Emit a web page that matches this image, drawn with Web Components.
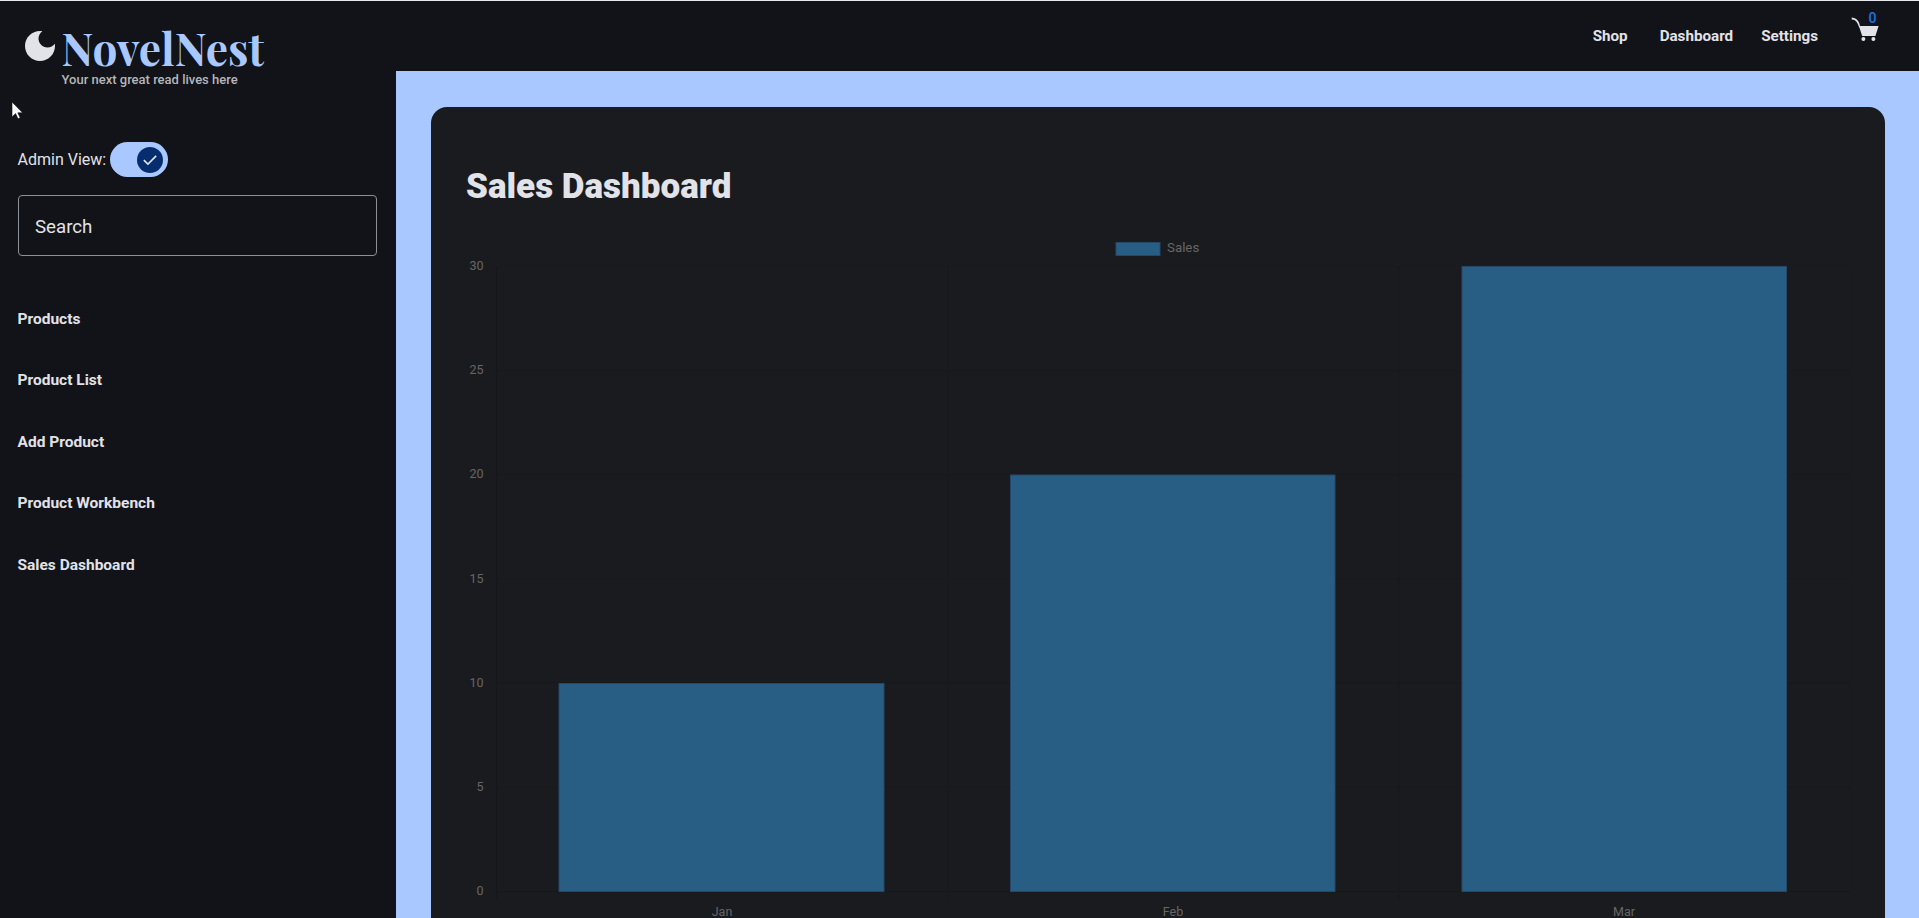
<!DOCTYPE html>
<html lang="en"><head><meta charset="utf-8"><title>NovelNest</title>
<style>
html,body{margin:0;padding:0;height:100%;overflow:hidden;background:#a8c8ff;}
body{font-family:Roboto,"Liberation Sans",sans-serif;}
</style></head>
<body>
<nn-app>
  <nn-header slot="header"></nn-header>
  <nn-sidebar slot="sidebar">
    <nn-toggle></nn-toggle>
    <nn-search></nn-search>
    <nn-navlink>Products</nn-navlink>
    <nn-navlink>Product List</nn-navlink>
    <nn-navlink>Add Product</nn-navlink>
    <nn-navlink>Product Workbench</nn-navlink>
    <nn-navlink>Sales Dashboard</nn-navlink>
  </nn-sidebar>
  <nn-card slot="main"><nn-chart></nn-chart></nn-card>
</nn-app>
<script>
function def(name, html, init){
  customElements.define(name, class extends HTMLElement{
    constructor(){super();this.attachShadow({mode:'open'}).innerHTML=html;}
    connectedCallback(){if(init)init(this.shadowRoot,this);}
  });
}
def('nn-app',`<style>
:host{display:grid;grid-template-columns:396px 1fr;grid-template-rows:70px 1fr;height:918px;width:1919px;overflow:hidden;border-top:1px solid #e8e8ee;box-sizing:border-box;background:#a8c8ff}
.h{grid-column:1/3;min-width:0;position:relative;z-index:1}
.s{min-width:0}.m{min-width:0}
</style>
<div class="h"><slot name="header"></slot></div>
<div class="s"><slot name="sidebar"></slot></div>
<div class="m"><slot name="main"></slot></div>`);

def('nn-header',`<style>
:host{display:flex;height:70px;background:#111318;color:#e2e2e9;align-items:flex-start;justify-content:space-between;position:relative}
.brand{display:grid;grid-template-columns:40px auto;padding:21.5px 0 0 20px;column-gap:1.5px}
svg.moon{width:40px;height:40px;display:block;margin-top:3.5px}
.name{font:700 44.2px/50px "Playfair Display","Liberation Serif",serif;color:#a8c8ff;margin-top:0}
.tag{grid-column:2;font:500 13px/14px Roboto,sans-serif;color:#b5b6bb;margin-top:0}
nav{display:flex;align-items:flex-start;padding-top:24.7px;margin-right:39px}
nav a{font:700 15.2px/20px Roboto,sans-serif;color:#e2e2e9;white-space:nowrap}
nav a:nth-child(2){margin-left:32px}
nav a:nth-child(3){margin-left:28px}
.cart{position:relative;width:30px;height:30px;margin-left:32px;margin-top:-10.7px}
.cart svg{display:block;width:30px;height:30px}
.cart b{position:absolute;left:18.5px;top:-5px;font:500 14px/16px Roboto,sans-serif;color:#1a73e8}
</style>
<div class="brand">
<svg class="moon" viewBox="0 0 24 24"><path fill="#e2e2e9" d="M12 3c-4.97 0-9 4.03-9 9s4.03 9 9 9 9-4.03 9-9c0-.46-.04-.92-.1-1.36-.98 1.37-2.58 2.26-4.4 2.26-2.98 0-5.4-2.42-5.4-5.4 0-1.81.89-3.42 2.26-4.4-.44-.06-.9-.1-1.36-.1z"/></svg>
<span class="name">NovelNest</span><span class="tag">Your next great read lives here</span>
</div>
<nav><a>Shop</a><a>Dashboard</a><a>Settings</a>
<span class="cart"><svg viewBox="0 0 30 30"><path fill="#e2e2e9" d="M1.7 2.6C5 3 8 4.5 9.2 8L10 11H28.6L25.4 21H12.2L9.7 13.6 7.4 8.2C6.3 5.8 4.4 4.6 1.7 4.4Z"/><circle cx="13.4" cy="24" r="2" fill="#e2e2e9"/><circle cx="23.4" cy="24" r="2" fill="#e2e2e9"/></svg><b>0</b></span></nav>`);

def('nn-sidebar',`<style>
:host{display:block;background:#111318;height:847px;padding:70.5px 0 0 17.5px;box-sizing:border-box;color:#e2e2e9}
.cursor{position:absolute;left:11px;top:101px;width:14px;height:20px}
</style><svg class="cursor" viewBox="0 0 14 20"><path fill="#fff" stroke="#111318" stroke-width=".6" d="M1 1v15l3.6-3.4 2.4 5.2 2.2-1-2.4-5h4.8Z"/></svg><slot></slot>`);

def('nn-toggle',`<style>
:host{display:flex;align-items:center;height:36px;font:400 16px/20px Roboto,sans-serif;color:#e2e2e9}
.t{width:58px;height:35px;border-radius:18px;background:#a8c8ff;margin-left:4px;display:flex;align-items:center;justify-content:flex-end;padding-right:5px;box-sizing:border-box}
.k{width:26px;height:26px;border-radius:50%;background:#062e6f;display:flex;align-items:center;justify-content:center}
svg{width:20px;height:20px;display:block}
</style>Admin View:<span class="t"><span class="k"><svg viewBox="0 0 24 24"><path fill="#e2e2e9" d="M9.55 18.4 3.9 12.75l1.45-1.45 4.2 4.2 9.1-9.1 1.45 1.45Z"/></svg></span></span>`);

def('nn-search',`<style>
:host{display:flex;align-items:center;width:359px;height:61px;box-sizing:border-box;border:1px solid #8e9099;border-radius:4px;margin:17.5px 0 32.5px;padding:2.5px 0 0 16.5px;font:400 18.7px/24px Roboto,sans-serif;color:#e2e2e9}
</style><span>Search</span>`);

def('nn-navlink',`<style>
:host{display:block;height:61.6px;font:700 15.5px/61.6px Roboto,sans-serif;color:#e2e2e9;white-space:nowrap}
</style><slot></slot>`);

def('nn-card',`<style>
:host{display:block;margin:36px 34px 0 35px;background:#1a1b1f;border-radius:16px;height:900px;padding:58px 35px 0;box-sizing:border-box}
h1{margin:0;font:900 35px/44px Roboto,sans-serif;color:#e2e2e9}
</style><h1>Sales Dashboard</h1><slot></slot>`);

def('nn-chart',`<style>
:host{display:block;position:relative;margin-left:-35px;width:1454px;height:760px}
svg{display:block;position:absolute;left:0;top:0;width:1454px;height:760px}
text{font:12.5px Roboto,"Liberation Sans",sans-serif;fill:#666}
text.l{font-size:13.3px}
</style><svg id="c" xmlns="http://www.w3.org/2000/svg" viewBox="0 0 1454 760"></svg>`,
(root)=>{
  const svg=root.getElementById('c');
  // card origin x=431, y=107; chart box top = 107+58+44 = 209
  const ox=431, oy=209;
  const X=x=>x-ox, Y=y=>y-oy;
  const L=496.5,R=1850.5,T=266.5,B=891.5;
  let s='';
  const grid='#181a1d', axis='#15171a';
  for(let i=0;i<=6;i++){
    const y=T+(B-T)*i/6;
    s+=`<line x1="${X(L)}" x2="${X(R)}" y1="${Y(y)}" y2="${Y(y)}" stroke="${i==6?axis:grid}"/>`;
    s+=`<text x="${X(483.5)}" y="${Y(y)+3.5}" text-anchor="end">${30-i*5}</text>`;
  }
  for(let i=0;i<=3;i++){
    const x=L+(R-L)*i/3;
    s+=`<line x1="${X(x)}" x2="${X(x)}" y1="${Y(T)}" y2="${Y(B+8)}" stroke="${i==0?axis:grid}"/>`;
  }
  const bars=[[559,884,683.5,'Jan',722],[1010.5,1335,475,'Feb',1173],[1462,1786.5,266.5,'Mar',1624]];
  for(const [a,b,t,n,c] of bars){
    s+=`<rect x="${X(a)}" y="${Y(t)}" width="${b-a}" height="${B-t}" fill="#285e84" stroke="#24486a" stroke-width="1"/>`;
    s+=`<text x="${X(c)}" y="${Y(916)}" text-anchor="middle">${n}</text>`;
  }
  s+=`<rect x="${X(1116)}" y="${Y(242.5)}" width="44" height="13" fill="#285e84" stroke="#24486a"/>`;
  s+=`<text class="l" x="${X(1167)}" y="${Y(251.5)}">Sales</text>`;
  svg.innerHTML=s;
});
</script>
</body></html>
